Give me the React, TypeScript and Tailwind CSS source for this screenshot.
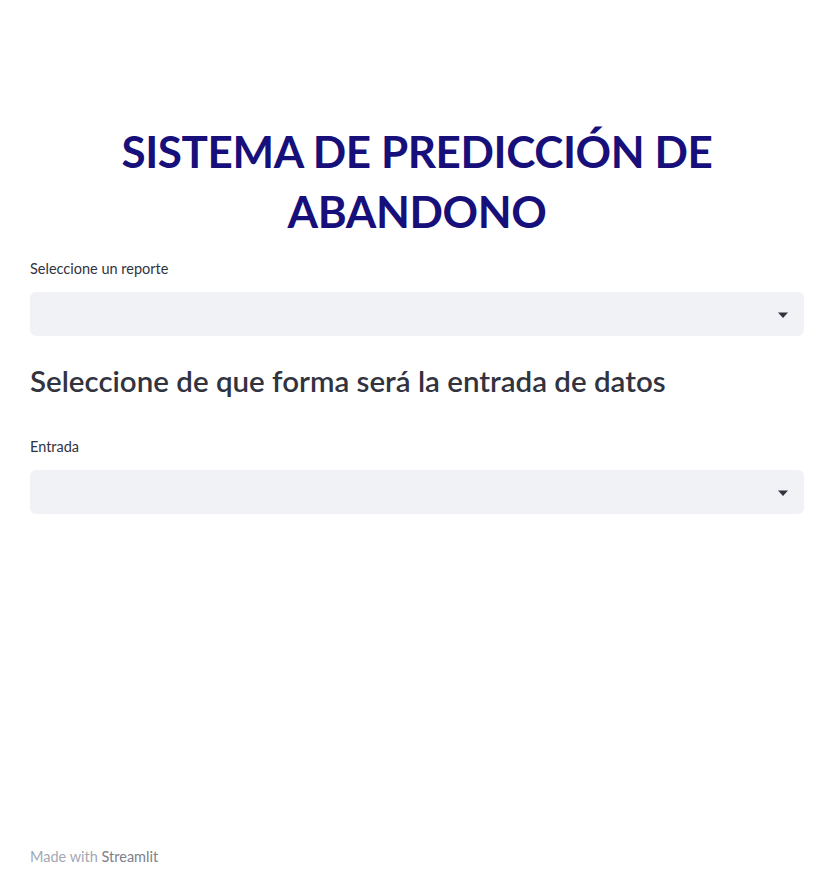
import React from 'react'

const SelectBox = () => (
  <div className="flex h-[44px] w-full items-center justify-end rounded-[6px] bg-[#f0f2f6] pr-[15px]">
    <svg width="12" height="7" viewBox="0 0 12 7" className="mt-[2px]">
      <path d="M1 0.5h10L6 6z" fill="#31333f" />
    </svg>
  </div>
)

export default function App() {
  return (
    <div className="flex min-h-[870px] flex-col bg-white font-['Lato',sans-serif] text-[#31333f]">
      <main className="flex flex-1 flex-col px-[30px] pt-[121px] w-[834px]">
        <h1 className="text-center text-[44px] font-bold leading-[60px] tracking-[-0.4px] text-[#170f7a]">
          SISTEMA DE PREDICCIÓN DE
          <br />
          ABANDONO
        </h1>

        <label className="mt-[18px] block text-[14.5px] leading-[20px]">Seleccione un reporte</label>
        <div className="mt-[13px]">
          <SelectBox />
        </div>

        <h2 className="mt-[27px] text-[29.5px] font-semibold leading-[36px]">
          Seleccione de que forma será la entrada de datos
        </h2>

        <label className="mt-[38px] block text-[14.5px] leading-[20px]">Entrada</label>
        <div className="mt-[13px]">
          <SelectBox />
        </div>
      </main>

      <footer className="px-[30px] pb-[3px] text-[14.5px] leading-[20px] text-[#a3a8b4]">
        Made with <span className="text-[#7d808c]">Streamlit</span>
      </footer>
    </div>
  )
}
